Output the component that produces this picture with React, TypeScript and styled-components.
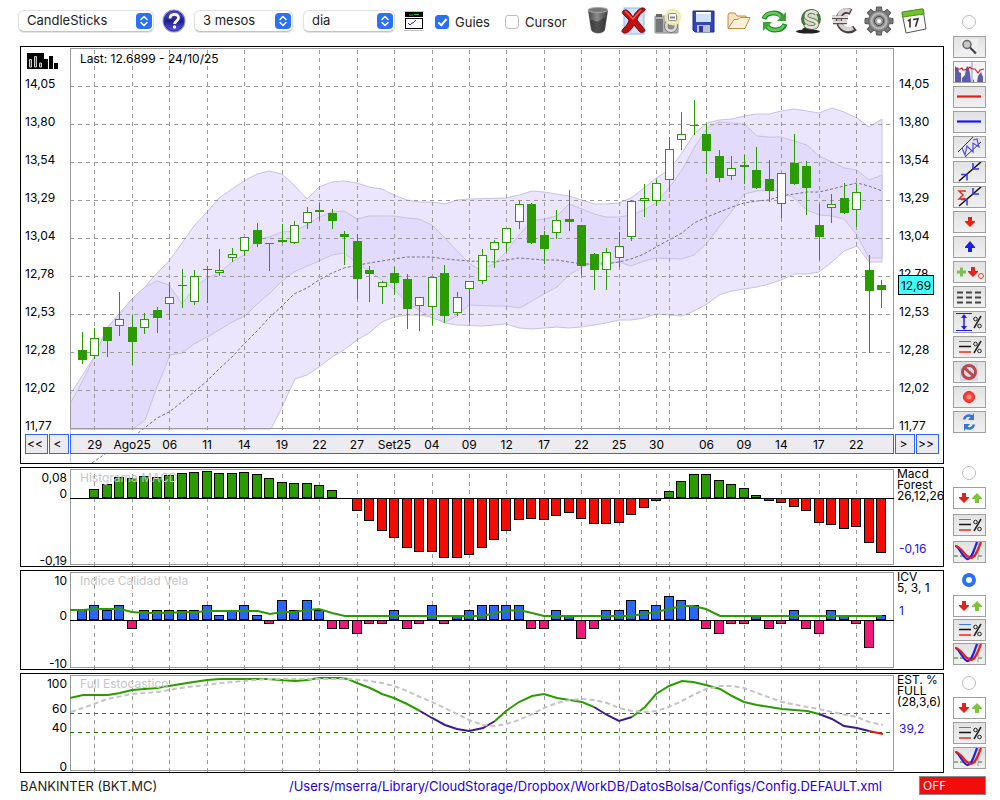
import React from "react";
import styled, { createGlobalStyle, css } from "styled-components";

const GlobalStyle = createGlobalStyle`
  *, *::before, *::after { box-sizing: border-box; }
  body {
    margin: 0;
    background: #fff;
    color: #000;
    font-family: Inter, "Liberation Sans", sans-serif;
    font-size: 12px;
    line-height: 16px;
  }
  button, select, input { font: inherit; color: inherit; margin: 0; }
`;

/* ---------- layout ---------- */

const Page = styled.div`
  display: grid;
  grid-template-columns: minmax(0, 1fr) 33px;
  column-gap: 9px;
  padding-right: 14px;
`;

const MainColumn = styled.main`
  min-width: 0;
`;

const Toolbar = styled.header`
  display: flex;
  align-items: center;
  height: 46px;
  padding: 0 12px 4px 18px;
  font-size: 13px;
  color: #222;
`;

const Panels = styled.div`
  display: flex;
  flex-direction: column;
  gap: 3px;
  padding-left: 20px;
`;

const Panel = styled.section<{ $height: number }>`
  display: grid;
  grid-template-columns: 49px minmax(0, 1fr) 49px;
  grid-template-rows: minmax(0, 1fr);
  height: ${(p) => p.$height}px;
  border: 1px solid #000;
  overflow: hidden;
`;

const Plot = styled.svg`
  display: block;
  grid-column: 2;
  grid-row: 1 / -1;
  width: 100%;
  height: 100%;
`;

const PlotTitle = styled.h2<{ $muted?: boolean }>`
  grid-column: 2;
  grid-row: 1;
  align-self: start;
  justify-self: start;
  margin: 0;
  padding: 4px 0 0 10px;
  font-size: 12px;
  font-weight: 400;
  line-height: 16px;
  color: ${(p) => (p.$muted ? "#c6c6c6" : "#000")};
  z-index: 1;
  ${(p) => p.$muted && css`padding-top: 2px;`}
`;

/* ---------- toolbar controls ---------- */

const SelectBox = styled.div<{ $width: number; $gap: number }>`
  display: grid;
  align-items: center;
  width: ${(p) => p.$width}px;
  margin-right: ${(p) => p.$gap}px;
`;

const SelectField = styled.select`
  grid-area: 1 / 1;
  appearance: none;
  width: 100%;
  height: 22px;
  padding: 0 24px 2px 8px;
  border: 1px solid #e0e0e0;
  border-bottom-color: #c4c4c4;
  border-radius: 6px;
  background: #fff;
  box-shadow: 0 1px 1px rgba(0, 0, 0, 0.12);
`;

const Stepper = styled.svg`
  grid-area: 1 / 1;
  justify-self: end;
  width: 16px;
  height: 16px;
  margin-right: 2px;
  pointer-events: none;
`;

const IconButton = styled.button<{ $gap?: number }>`
  display: flex;
  justify-content: center;
  flex: none;
  padding: 0;
  margin-right: ${(p) => p.$gap ?? 0}px;
  border: 0;
  background: none;
`;

const CheckLabel = styled.label<{ $gap: number }>`
  display: flex;
  align-items: center;
  gap: 6px;
  margin-right: ${(p) => p.$gap}px;
  padding-top: 2px;
`;

const CheckField = styled.input`
  appearance: none;
  display: grid;
  place-items: center;
  width: 14px;
  height: 14px;
  border: 1px solid #bdbdbd;
  border-radius: 3px;
  background: #fff;
  &:checked {
    border-color: #2a6ff8;
    background: #2a6ff8;
  }
  &:checked::after {
    content: "";
    width: 5px;
    height: 9px;
    margin-top: -2px;
    border: solid #fff;
    border-width: 0 2px 2px 0;
    transform: rotate(40deg);
  }
`;

const IconRow = styled.div`
  display: grid;
  grid-template-columns: repeat(10, minmax(0, 1fr));
  flex: 0 1 352px;
  margin-left: auto;
`;

/* ---------- axes ---------- */

const PriceAxis = styled.div<{ $right?: boolean }>`
  grid-column: ${(p) => (p.$right ? 3 : 1)};
  grid-row: 1;
  position: relative;
  display: flex;
  flex-direction: column;
  gap: 22px;
  padding: ${(p) => (p.$right ? "29px 0 0 5px" : "29px 0 0 4px")};
`;

const ChartTypeIcon = styled.svg`
  position: absolute;
  left: 6px;
  top: 6px;
  width: 32px;
  height: 16px;
`;

const PriceTag = styled.output`
  position: absolute;
  left: 4px;
  top: 228px;
  width: 36px;
  height: 20px;
  border: 1px solid #000;
  background: #40ffff;
  line-height: 19px;
  text-align: center;
`;

const Pager = styled.div<{ $right?: boolean }>`
  grid-column: ${(p) => (p.$right ? 3 : 1)};
  grid-row: 2;
  display: flex;
  gap: 1px;
  padding-left: ${(p) => (p.$right ? 1 : 4)}px;
  align-items: flex-start;
`;

const PagerButton = styled.button<{ $wide?: boolean }>`
  width: ${(p) => (p.$wide ? 23 : 20)}px;
  height: 20px;
  padding: 0 3px 0 0;
  border: 1px solid #2f66f5;
  background: #ebebf0;
  text-align: center;
`;

const DateBar = styled.div`
  grid-column: 2;
  grid-row: 2;
  z-index: 1;
  display: grid;
  grid-template-columns: repeat(16, minmax(0, 3fr)) minmax(0, 1fr) repeat(5, minmax(0, 3fr));
  height: 20px;
  padding: 0 18px 0 5px;
  border: 1px solid #2f66f5;
  background: #ebebf0;
  line-height: 20px;
`;

const DateLabel = styled.span`
  display: flex;
  justify-content: center;
  white-space: nowrap;
`;

const PricePanel = styled(Panel)`
  grid-template-rows: 387px 29px;
`;

const ScaleAxis = styled.div`
  grid-column: 1;
  grid-row: 1;
  display: flex;
  flex-direction: column;
  align-items: flex-end;
  padding: 2px 3px 0 0;
`;

const ScaleLabel = styled.span<{ $gap: number }>`
  flex: none;
  margin-top: ${(p) => p.$gap}px;
  line-height: 14px;
`;

const Legend = styled.div`
  grid-column: 3;
  grid-row: 1;
  padding-left: 3px;
  line-height: 11px;
  white-space: pre;
`;

const LegendValue = styled.div<{ $gap: number }>`
  margin-top: ${(p) => p.$gap}px;
  padding-left: 2px;
  line-height: 16px;
  color: #1f10f0;
`;

/* ---------- side tools ---------- */

const SideColumn = styled.aside`
  display: flex;
  flex-direction: column;
`;

const ToolGroup = styled.div<{ $top: number; $gap: number }>`
  display: flex;
  flex-direction: column;
  gap: ${(p) => p.$gap}px;
  margin-top: ${(p) => p.$top}px;
`;

const RadioField = styled.input<{ $gap: number }>`
  appearance: none;
  width: 14px;
  height: 14px;
  margin: 0 0 ${(p) => p.$gap}px 9px;
  border: 1px solid #bdbdbd;
  border-radius: 50%;
  background: #fff;
  &:checked {
    border: 4px solid #2a6ff8;
  }
`;

const ToolButton = styled.button<{ $plain?: boolean }>`
  display: block;
  width: 33px;
  height: 22px;
  padding: 0;
  border: 1px solid #a0a0a0;
  background: ${(p) => (p.$plain ? "#fff" : "linear-gradient(#e2e2e2, #f0f0f0)")};
  svg { display: block; }
`;

/* ---------- footer ---------- */

const Footer = styled.footer`
  grid-column: 1 / -1;
  display: flex;
  align-items: center;
  height: 25px;
  padding-left: 20px;
  font-size: 13px;
  color: #222;
`;

const ConfigLink = styled.a`
  margin-left: auto;
  color: #1f00e0;
  text-decoration: none;
`;

const OffButton = styled.button`
  width: 67px;
  height: 19px;
  margin-left: 37px;
  padding: 0 0 0 3px;
  border: 1px solid #8a8a8a;
  background: #f20c0c;
  color: #fff;
  font-size: 12px;
  line-height: 16px;
  text-align: left;
`;

/* ---------- data ---------- */

const GREEN = "#2a9c00";
const slotX = (i: number) => Math.round(82 + 12.485 * i);

const priceLabels = ["14,05", "13,80", "13,54", "13,29", "13,04", "12,78", "12,53", "12,28", "12,02", "11,77"];
const dateLabels = [
  "29", "Ago25", "06", "11", "14", "19", "22", "27", "Set25", "04", "09",
  "12", "17", "22", "25", "30", "", "06", "09", "14", "17", "22",
];
const guideSlots = [1, 4, 7, 10, 13, 16, 19, 22, 25, 28, 31, 34, 37, 40, 43, 46, 47, 50, 53, 56, 59, 62];

/* high, body top, body bottom, low, falling */
const candles: [number, number, number, number, number][] = [
  [332, 350, 360, 364, 1], [328, 338, 356, 359, 0], [327, 327, 341, 357, 1], [292, 319, 326, 336, 0],
  [315, 327, 342, 365, 1], [313, 319, 328, 334, 0], [307, 310, 318, 333, 1], [282, 297, 304, 320, 0],
  [269, 285, 286, 308, 1], [270, 276, 302, 305, 0], [266, 269, 270, 303, 1], [249, 270, 273, 276, 0],
  [248, 254, 258, 262, 0], [237, 237, 251, 256, 0], [223, 230, 244, 247, 1], [243, 243, 244, 271, 1],
  [224, 240, 242, 243, 1], [221, 225, 243, 244, 0], [207, 212, 223, 229, 0], [203, 210, 212, 220, 1],
  [209, 213, 221, 229, 1], [231, 234, 237, 265, 1], [234, 241, 279, 299, 1], [266, 270, 274, 302, 1],
  [281, 282, 287, 304, 0], [267, 273, 283, 295, 1], [274, 279, 309, 329, 1], [297, 297, 306, 331, 0],
  [277, 277, 307, 325, 0], [265, 273, 316, 323, 1], [292, 297, 313, 316, 0], [281, 281, 289, 322, 0],
  [249, 255, 281, 284, 0], [240, 242, 250, 268, 0], [228, 228, 243, 252, 0], [201, 204, 222, 229, 0],
  [203, 204, 243, 244, 1], [231, 235, 249, 264, 1], [210, 220, 233, 239, 0], [190, 219, 222, 231, 1],
  [225, 225, 266, 275, 1], [253, 254, 270, 290, 1], [248, 252, 270, 290, 0], [232, 246, 258, 267, 0],
  [200, 201, 237, 241, 0], [184, 198, 201, 217, 0], [180, 183, 201, 206, 0], [137, 149, 180, 192, 0],
  [112, 134, 140, 150, 0], [100, 125, 126, 135, 1], [124, 134, 151, 174, 1], [150, 156, 178, 182, 1],
  [156, 168, 176, 180, 0], [155, 165, 167, 184, 1], [147, 170, 188, 189, 1], [160, 179, 191, 202, 1],
  [173, 173, 204, 218, 0], [134, 163, 184, 185, 1], [161, 166, 188, 215, 1], [204, 225, 237, 260, 1],
  [194, 204, 208, 223, 0], [183, 198, 213, 214, 1], [184, 192, 210, 227, 0], [255, 270, 291, 353, 1],
  [280, 285, 290, 308, 1],
];

const outerUpper =
  "70,395 94,357 107,328 119,314 132,299 145,287 157,273 169,261 182,243 194,226 207,212 219,198 232,189 244,181 257,174 269,171 282,174 294,185 307,199 319,187 332,182 344,181 357,183 369,187 382,189 394,195 407,200 419,202 432,202 445,204 457,200 469,199 506,198 519,195 532,191 544,192 569,196 582,200 594,204 606,204 619,203 631,198 644,188 656,178 669,170 682,153 694,134 707,123 719,120 732,119 744,116 757,114 769,114 781,111 794,109 807,111 819,113 832,108 844,112 857,118 869,127 882,119";
const outerLower =
  "882,262 869,262 857,246 844,251 832,262 819,272 807,274 794,274 781,280 769,284 757,287 744,289 732,291 719,295 707,304 694,311 682,316 656,314 644,318 631,320 619,320 606,323 594,325 582,327 569,328 557,327 532,329 519,328 506,324 482,326 457,325 445,323 432,317 419,315 407,315 394,317 382,322 369,333 357,340 344,350 332,357 319,367 307,375 295,379 282,407 271,429 70,429";
const innerUpper =
  "70,404 82,382 94,358 107,328 119,314 132,299 145,287 157,281 169,285 182,304 194,288 207,278 219,273 232,262 244,255 257,240 269,237 282,232 294,231 307,225 319,217 332,212 344,211 357,219 369,216 394,216 407,218 419,219 432,225 445,238 457,251 469,263 480,270 494,264 506,252 519,235 532,221 544,219 557,216 569,204 582,209 594,214 606,217 619,217 631,215 644,210 656,203 669,188 682,170 694,148 707,128 719,122 744,124 757,136 769,137 781,137 794,141 807,145 819,156 832,162 844,168 857,170 869,180 882,175";
const innerLower =
  "882,258 869,258 857,235 844,219 832,216 819,215 807,210 794,198 781,191 769,190 757,191 744,194 732,211 719,227 707,243 694,255 682,259 656,258 644,261 631,266 619,262 594,263 582,267 569,275 557,287 544,294 532,301 520,308 506,306 494,306 469,305 457,316 445,322 432,318 419,310 407,303 394,289 382,280 369,271 357,263 344,253 332,255 319,261 307,266 294,272 282,281 269,294 257,304 245,316 232,322 219,330 207,337 194,344 182,353 170,355 157,387 145,420 133,429 70,429";
const average =
  "92,463 105,454 137,434 157,418 169,412 182,402 194,392 207,381 219,369 232,357 245,343 257,331 269,318 282,306 294,294 307,288 319,280 332,273 344,268 369,263 394,259 407,257 432,257 445,259 469,261 494,262 519,258 544,260 557,260 569,262 582,264 606,264 619,262 631,259 644,254 656,247 669,240 682,233 694,223 707,217 732,207 744,203 757,201 769,200 781,196 794,194 807,192 819,192 832,189 844,186 857,183 869,186 882,191";

const macdZero = 498;
const macdEnds = [
  489, 484, 477, 478, 476, 477, 475, 473, 472, 471, 473, 473, 472, 474, 478, 482, 483, 483, 485, 490, 497,
  511, 521, 531, 538, 548, 552, 552, 558, 558, 555, 548, 540, 531, 520, 519, 520, 516, 513, 519, 524, 524,
  523, 515, 508, 501, 491, 481, 474, 474, 480, 484, 488, 495, 501, 503, 507, 511, 523, 525, 529, 527, 543, 553,
];

const icvZero = 620;
const icvEnds = [
  610, 605, 610, 605, 629, 610, 610, 610, 610, 610, 605, 615, 610, 605, 615, 624, 600, 610, 600, 610, 629,
  629, 634, 624, 624, 610, 629, 624, 605, 624, 615, 610, 605, 605, 605, 605, 629, 629, 610, 615, 639, 629,
  610, 610, 600, 610, 605, 596, 600, 605, 629, 634, 624, 624, 615, 629, 624, 610, 629, 634, 610, 615, 624,
  648, 615,
];
const icvLine =
  "70,610 83,610 94,609 120,609 132,612 145,613 169,613 182,612 198,612 207,611 258,611 270,614 282,612 294,612 307,610 319,609 332,613 345,616 483,616 495,613 506,611 519,610 532,613 544,616 631,616 643,614 656,612 669,609 682,606 693,606 706,609 720,616 882,616";

const slowLine =
  "71,712 94,704 107,699 132,694 158,692 174,689 188,687 207,685 220,683 244,681 267,679 350,679 370,681 382,683 394,686 407,691 420,697 432,702 457,714 469,720 483,725 495,726 506,724 519,720 532,714 544,708 557,703 570,700 582,699 594,700 607,703 619,708 632,711 645,712 656,711 669,707 682,701 693,695 706,689 720,686 732,686 744,688 757,693 782,702 807,707 819,709 832,712 857,717 869,722 883,725";
const fastSegments: [string, string][] = [
  [GREEN, "70,698 83,695 108,695 120,693 132,690 157,688 169,686 187,683 207,680 220,679 267,679 295,681 307,680 319,678 340,678 348,679 357,683 370,688 382,694 394,698 407,704 420,711"],
  ["#3a1c8c", "420,711 432,718 445,725 457,729 469,731 483,728 495,721"],
  [GREEN, "495,721 506,711 519,702 532,696 544,694 557,698 582,702 594,707"],
  ["#3a1c8c", "594,707 607,715 619,721 632,717"],
  [GREEN, "632,717 645,707 656,694 669,686 682,681 693,682 706,685 720,689 732,696 744,702 757,705 782,709 807,711 819,714"],
  ["#3a1c8c", "819,714 832,719 844,726 857,728 869,731"],
  ["#f01010", "869,731 883,734"],
];

/* ---------- charts ---------- */

const Guides = ({ top, bottom }: { top: number; bottom: number }) => (
  <g stroke="#999" strokeDasharray="4 4" shapeRendering="crispEdges">
    {guideSlots.map((i) => (
      <line key={i} x1={slotX(i) + 0.5} x2={slotX(i) + 0.5} y1={bottom} y2={top} />
    ))}
  </g>
);

const Frame = ({ top, bottom }: { top: number; bottom: number }) => (
  <rect x="70.5" y={top + 0.5} width="823" height={bottom - top} fill="none" stroke="#999" shapeRendering="crispEdges" />
);

const PriceChart = () => (
  <Plot viewBox="70 47 824 416" preserveAspectRatio="none" role="img" aria-label="BKT.MC">
    <polygon points={`${outerUpper} ${outerLower}`} fill="#ebe5fd" stroke="#c8c1e6" />
    <polygon points={`${innerUpper} ${innerLower}`} fill="#e3dbfc" stroke="#c8c1e6" />
    <line x1="70.5" x2="70.5" y1="429" y2="463" stroke="#c8c1e6" />
    <polyline points={average} fill="none" stroke="#777089" strokeDasharray="3 2" />
    <Frame top={48} bottom={428} />
    <Guides top={49} bottom={430} />
    <g stroke="#999" strokeDasharray="4 4" shapeRendering="crispEdges">
      {priceLabels.slice(0, 9).map((label, i) => (
        <line key={label} x1="70" x2="894" y1={86.5 + i * 38} y2={86.5 + i * 38} />
      ))}
    </g>
    <g shapeRendering="crispEdges">
      {candles.map(([high, top, bottom, low, falling], i) => {
        const x = slotX(i);
        return (
          <g key={i}>
            <rect x={x} y={high} width="1" height={low - high} fill={GREEN} />
            {falling ? (
              <rect x={x - 4} y={top} width="9" height={bottom - top} fill={GREEN} />
            ) : (
              <rect x={x - 3.5} y={top + 0.5} width="8" height={bottom - top - 1} fill="#fff" stroke={GREEN} />
            )}
          </g>
        );
      })}
    </g>
  </Plot>
);

const Bars = ({ ends, zero, first, up, down }: { ends: number[]; zero: number; first: number; up: string; down: string }) => (
  <g shapeRendering="crispEdges" stroke="#000">
    {ends.map((end, k) => {
      const rising = end < zero;
      const y = rising ? end : zero;
      const h = rising ? zero - end : end - zero;
      return (
        <rect
          key={k}
          x={slotX(k + first) - 4.5}
          y={y + 0.5}
          width="9"
          height={Math.max(h - 1, 0)}
          fill={rising ? up : down}
        />
      );
    })}
    <line x1="70" x2="894" y1={zero + 0.5} y2={zero + 0.5} />
  </g>
);

const MacdChart = () => (
  <Plot viewBox="70 468 824 98" preserveAspectRatio="none" role="img" aria-label="Histgrama MACD">
    <Frame top={469} bottom={564} />
    <Guides top={473} bottom={566} />
    <Bars ends={macdEnds} zero={macdZero} first={1} up={GREEN} down="#f20c04" />
  </Plot>
);

const IcvChart = () => (
  <Plot viewBox="70 571 824 98" preserveAspectRatio="none" role="img" aria-label="Indice Calidad Vela">
    <Frame top={572} bottom={667} />
    <Guides top={576} bottom={669} />
    <Bars ends={icvEnds} zero={icvZero} first={0} up="#2b66fb" down="#f2157a" />
    <polyline points={icvLine} fill="none" stroke={GREEN} strokeWidth="2" />
  </Plot>
);

const StochasticChart = () => (
  <Plot viewBox="70 674 824 98" preserveAspectRatio="none" role="img" aria-label="Full Estocastico">
    <Frame top={675} bottom={770} />
    <Guides top={679} bottom={772} />
    <line x1="70" x2="894" y1="713.5" y2="713.5" stroke="#d8201c" strokeDasharray="4 4" shapeRendering="crispEdges" />
    <line x1="70" x2="894" y1="732.5" y2="732.5" stroke="#1c7008" strokeDasharray="4 4" shapeRendering="crispEdges" />
    {fastSegments.map(([color, points], i) => (
      <polyline key={i} points={points} fill="none" stroke={color} strokeWidth="2" />
    ))}
    <polyline points={slowLine} fill="none" stroke="#c4c4c4" strokeWidth="2" strokeDasharray="5 3" />
  </Plot>
);

/* ---------- toolbar icons ---------- */

const Icon = ({ size = 30, children }: { size?: number; children: React.ReactNode }) => (
  <svg width={size} height={size} viewBox={`0 0 ${size} ${size}`} fill="none">
    {children}
  </svg>
);

const HelpIcon = () => (
  <Icon size={24}>
    <defs>
      <linearGradient id="help" x1="0" y1="0" x2="0" y2="1">
        <stop offset="0" stopColor="#5a5ac4" />
        <stop offset="0.5" stopColor="#1c1c8c" />
        <stop offset="1" stopColor="#5a5af0" />
      </linearGradient>
    </defs>
    <circle cx="12" cy="12" r="11.5" fill="#8f8fe0" />
    <circle cx="12" cy="12" r="10" fill="url(#help)" stroke="#2a2aa0" />
    <path d="M8 9.500c0-5.500 8.500-5.500 8.500-.5 0 3-3.800 2.800-3.800 6" stroke="#fff" strokeWidth="2.800" />
    <circle cx="12.500" cy="18" r="1.700" fill="#fff" />
  </Icon>
);

const AlertIcon = () => (
  <Icon size={20}>
    <path d="M0 .5h20M0 19.500h20" stroke="#c8c8c8" />
    <rect x="1" y="1" width="18" height="5" fill="#000" />
    <path d="M5 4h4M10 3.500h5" stroke="#1fc01f" />
    <rect x="1.500" y="7.500" width="17" height="10" fill="#fff" stroke="#000" />
    <path d="M4 12l2 2 2-2 1 0 3-3" stroke="#2020e0" />
  </Icon>
);

const TrashIcon = () => (
  <Icon>
    <defs>
      <linearGradient id="bin" x1="0" x2="1">
        <stop offset="0" stopColor="#444" />
        <stop offset="0.45" stopColor="#8c8c8c" />
        <stop offset="1" stopColor="#3a3a3a" />
      </linearGradient>
    </defs>
    <path d="M5 4l3 20c2 4.500 12 4.500 14 0l3-20z" fill="url(#bin)" />
    <path d="M7 15c3-3 5 2 9 0s4-4 7-3l-2 12c-2 4-10 4-12 0z" fill="#2c2c2c" opacity="0.600" />
    <ellipse cx="15" cy="4" rx="10" ry="2.500" fill="#777" stroke="#a8a8a8" />
  </Icon>
);

const DeleteIcon = () => (
  <Icon>
    <rect x="6" y="2" width="20" height="26" fill="#cfe3fa" stroke="#8bb8ee" />
    <path d="M5 5c3-2 5-1 7 2l3 4c2-4 5-8 9-9 2 0 4 1 3 2-4 3-7 6-8 10l8 10c0 2-3 3-5 2l-6-7c-3 5-6 8-9 8-3 0-4-2-2-4 3-3 5-5 6-9l-6-6c-1-1-1-2 0-3z" fill="#c3100e" stroke="#7f0806" />
    <path d="M7 5l8 8 8-9" stroke="#ee5a50" strokeWidth="1.500" />
  </Icon>
);

const CameraIcon = () => (
  <Icon>
    <rect x="2" y="10" width="23" height="17" rx="1" fill="#b4b4b4" stroke="#8a8a8a" />
    <path d="M3 8h6v3H3z" fill="#666" />
    <rect x="3" y="13" width="7" height="13" fill="#777" />
    <circle cx="18" cy="20" r="6.500" fill="#dcdcdc" stroke="#777" />
    <circle cx="18" cy="20" r="3.500" fill="#8a8a8a" />
    <circle cx="20" cy="11" r="8.500" fill="#f8f6cc" opacity="0.700" />
    <circle cx="20" cy="11" r="7" stroke="#efeaa0" strokeWidth="2" />
    <rect x="15.500" y="7.500" width="8" height="7" rx="1" fill="#fff" stroke="#888" />
    <path d="M17 11.500h5" stroke="#888" strokeWidth="2" />
  </Icon>
);

const SaveIcon = () => (
  <Icon>
    <path d="M5 5h21v21H7l-2-2z" fill="#3344b4" stroke="#1b2a86" />
    <rect x="8" y="6" width="15" height="10" fill="#cfe2fb" />
    <rect x="8" y="6" width="15" height="2" fill="#fff" />
    <rect x="9" y="19" width="13" height="7" fill="#c0c0cc" />
    <rect x="11" y="20" width="4" height="6" fill="#2a3aa0" />
  </Icon>
);

const FolderIcon = () => (
  <Icon>
    <path d="M5 22V9l1-2h6l2 3h9v4" fill="#fbe3bd" stroke="#c28a44" />
    <path d="M5 22.500l6-9 4 0 2-2h10l-5 11z" fill="#fdf0d9" stroke="#c28a44" strokeLinejoin="round" />
  </Icon>
);

const RefreshIcon = () => (
  <Icon>
    <path d="M5 13c2-7 14-8 18-2" stroke="#1f8a22" strokeWidth="5" />
    <path d="M5 12c3-6 13-7 17-1" stroke="#64cb54" strokeWidth="2.500" />
    <path d="M27 6v9H18z" fill="#3aa535" />
    <path d="M26 18c-2 7-14 8-18 2" stroke="#1f8a22" strokeWidth="5" />
    <path d="M25 19c-3 6-13 7-17 1" stroke="#64cb54" strokeWidth="2.500" />
    <path d="M4 25v-9h9z" fill="#3aa535" />
  </Icon>
);

const DollarIcon = () => (
  <Icon>
    <ellipse cx="14" cy="25.500" rx="12" ry="2" fill="#222" />
    <path d="M8 23l4-2 8 2-3 3h-7z" fill="#222" />
    <circle cx="17" cy="13" r="8.500" fill="#cfdcc8" stroke="#3f7c36" strokeWidth="3" />
    <path d="M23 8c-3-4-11-3-11 2 0 5 11 3 11 8 0 4-8 5-12 1" stroke="#5b6a4e" strokeWidth="4.500" />
    <path d="M23 8c-3-4-11-3-11 2 0 5 11 3 11 8 0 4-8 5-12 1" stroke="#e4e0d4" strokeWidth="3" />
  </Icon>
);

const EuroIcon = () => (
  <Icon>
    <path d="M22 6c-6-3-13 1-12 9 1 9 10 12 16 7" stroke="#4a3e42" strokeWidth="6" />
    <path d="M21 5c-6-3-12 1-11 9 1 8 8 11 14 8" stroke="#d8d3d3" strokeWidth="4" />
    <path d="M3 11.500h16M4 16.500h14" stroke="#5a5052" strokeWidth="3.500" />
    <path d="M3 11h16M4 16h14" stroke="#e0dcdc" strokeWidth="2" />
  </Icon>
);

const GearIcon = () => (
  <Icon>
    <g fill="#7a7a7a" stroke="#555">
      {[0, 45, 90, 135, 180, 225, 270, 315].map((a) => (
        <path key={a} d="M12 6l.5-5h5l.5 5z" transform={`rotate(${a} 15 15)`} />
      ))}
    </g>
    <circle cx="15" cy="15" r="10.500" fill="#8a8a8a" stroke="#666" />
    <circle cx="15" cy="15" r="7.500" stroke="#b8b8b8" strokeWidth="2" />
    <circle cx="15" cy="15" r="4.500" fill="#a5a5a5" stroke="#444" />
    <circle cx="15" cy="15" r="2" fill="#fff" />
  </Icon>
);

const CalendarIcon = () => (
  <Icon>
    <path d="M3 7l21-4 3 20-20 4z" fill="#fbfbfb" stroke="#555" />
    <path d="M3 6l19-3 2 0 1 5-21 3z" fill="#6fc528" stroke="#4a9418" />
    <path d="M9 15l2-1.500v8M14 13.500l5-.7-2.500 8" stroke="#333" strokeWidth="1.600" />
  </Icon>
);

const actions: [string, React.ReactNode][] = [
  ["Trash", <TrashIcon />], ["Delete", <DeleteIcon />], ["Snapshot", <CameraIcon />], ["Save", <SaveIcon />],
  ["Open", <FolderIcon />], ["Refresh", <RefreshIcon />], ["Dollar", <DollarIcon />], ["Euro", <EuroIcon />],
  ["Settings", <GearIcon />], ["Calendar", <CalendarIcon />],
];

/* ---------- side icons, drawn on a 31 x 20 face ---------- */

const Face = ({ children }: { children: React.ReactNode }) => (
  <svg width="31" height="20" viewBox="0 0 31 20" fill="none">
    {children}
  </svg>
);

const PercentMark = () => (
  <g stroke="#222">
    <path d="M27 4l-7 12" strokeWidth="1.500" />
    <circle cx="21.500" cy="7" r="1.800" />
    <circle cx="25.500" cy="14" r="1.800" />
  </g>
);

const LevelsIcon = () => (
  <Face>
    <path d="M5 4.500h12" stroke="#3f78f5" />
    <path d="M5 9.500h12" stroke="#111" strokeWidth="1.500" />
    <path d="M5 15h12" stroke="#f25a48" strokeWidth="2" />
    <PercentMark />
  </Face>
);

const CrossIcon = () => (
  <Face>
    <path d="M0 14h29" stroke="#2c7a20" strokeDasharray="4 2" />
    <path d="M24 0v20" stroke="#999" strokeDasharray="3 2" />
    <path d="M2 4c4 2 8 14 12 13 4-1 6-9 9-17" stroke="#2222f0" strokeWidth="2.200" />
    <path d="M1 4c7 0 10 12 16 12 4 0 7-8 10-16" stroke="#e0241c" strokeWidth="2.200" />
  </Face>
);

const ArrowsIcon = () => (
  <Face>
    <path d="M8 5h4v4h3v1l-5 5-5-5V9h3z" fill="#e0241c" />
    <path d="M21 15h4v-4h3v-1l-5-5-5 5v1h3z" fill="#7cc43a" />
  </Face>
);

const SegmentArrows = () => (
  <>
    <path d="M5 19L27 0" stroke="#111" strokeWidth="1.500" />
    <path d="M7 12.500h6v6M19 1v6h6" stroke="#3434e8" strokeWidth="1.500" />
  </>
);

const drawingTools: [string, React.ReactNode][] = [
  ["Zoom", <Face><rect x="7" y="2" width="17" height="16" fill="#efefef" /><circle cx="13" cy="7.500" r="4" fill="#c8c8c8" stroke="#666" strokeWidth="1.500" /><path d="M16 10.500l6 6" stroke="#444" strokeWidth="2.200" /></Face>],
  ["Volume", <Face><rect width="31" height="20" fill="#f6f4fb" /><path d="M1 20V4l2 2 1-1 1 5 2 1v9zM8 20v-4l3-3 1-7 2-2 2 7 1 9zM18 20v-3l2 1v2zM23 20l1-6 3-4 2 5v5z" fill="#5c5cae" /><path d="M18 0v20" stroke="#c4c4e0" strokeWidth="2" /><path d="M1 7h5l2-1 1 2 5-1 2-2 2 2h3l3 4 2-3 4-1" stroke="#dc2020" strokeWidth="1.200" /></Face>],
  ["Red line", <Face><path d="M3 9.500h24" stroke="#f06a64" strokeWidth="3" /><path d="M3 9.500h24" stroke="#dc2020" /></Face>],
  ["Blue line", <Face><path d="M3 9.500h24" stroke="#6a6af4" strokeWidth="3" /><path d="M3 9.500h24" stroke="#1c1ce4" /></Face>],
  ["Channel", <Face><path d="M4 15L19 0M11 20L27 5" stroke="#333" /><path d="M8 11l3 7 2-9 6 6V6l6 4-2-8-4 1" stroke="#5050e0" strokeWidth="1.200" /></Face>],
  ["Trend", <Face><SegmentArrows /></Face>],
  ["Trend sum", <Face><SegmentArrows /><path d="M11 5V4H5l4 4-4 4h6v-1" stroke="#e83024" strokeWidth="1.500" /></Face>],
  ["Sell mark", <Face><path d="M14 5h4v4h3v1l-5 5-5-5V9h3z" fill="#f01c0c" /></Face>],
  ["Buy mark", <Face><path d="M14 15h4v-4h3v-1l-5-6-5 6v1h3z" fill="#1c1cf0" /></Face>],
  ["Marks", <Face><path d="M3 10h9M7.500 5.500v9" stroke="#7cc050" strokeWidth="3" /><path d="M17 5h4v4h3v1l-5 5-5-5V9h3z" fill="#e0241c" /><circle cx="27" cy="14" r="2.500" stroke="#e84038" /></Face>],
  ["Line style", <Face><path d="M3 5.500h24M3 10.500h24M3 15.500h24" stroke="#444" strokeWidth="2" strokeDasharray="6 3" /></Face>],
  ["Range", <Face><path d="M2 1.500h16M2 18.500h16" stroke="#2020e8" /><path d="M10 3v14" stroke="#2020e8" strokeWidth="1.500" /><path d="M7 6l3-4 3 4zM7 14l3 4 3-4z" fill="#2020e8" /><PercentMark /></Face>],
  ["Levels", <LevelsIcon />],
  ["Forbid", <Face><rect x="6" y="1" width="18" height="18" fill="#d4daea" /><circle cx="15" cy="10" r="6.500" stroke="#bc4846" strokeWidth="3" /><path d="M10.500 6l9 8" stroke="#bc4846" strokeWidth="3" /></Face>],
  ["Record", <Face><circle cx="15" cy="10" r="5.500" fill="#f4423c" stroke="#e02020" /><circle cx="15" cy="10" r="2.500" fill="#ff8a84" /></Face>],
  ["Reload", <Face><path d="M10 7.500c1-4 5-5 8-3" stroke="#3478d4" strokeWidth="2.500" /><path d="M20 12.500c-1 4-5 5-8 3" stroke="#3478d4" strokeWidth="2.500" /><path d="M20 1v7h-6zM10 19v-7h6z" fill="#3478d4" /></Face>],
];

/* ---------- page ---------- */

const Select = ({ label, value, width, gap }: { label: string; value: string; width: number; gap: number }) => (
  <SelectBox $width={width} $gap={gap}>
    <SelectField aria-label={label} defaultValue={value}>
      <option>{value}</option>
    </SelectField>
    <Stepper viewBox="0 0 16 16" fill="none">
      <rect width="16" height="16" rx="4" fill="#2a70f8" />
      <path d="M5 6.500l3-3 3 3M5 9.500l3 3 3-3" stroke="#fff" strokeWidth="1.500" strokeLinecap="round" strokeLinejoin="round" />
    </Stepper>
  </SelectBox>
);

const IndicatorTools = ({ name, top, radioGap, gap, checked }: { name: string; top: number; radioGap: number; gap: number; checked?: boolean }) => (
  <ToolGroup $top={top} $gap={gap}>
    <RadioField type="radio" name="active" aria-label={name} defaultChecked={checked} $gap={radioGap} />
    <ToolButton $plain aria-label="Signals"><ArrowsIcon /></ToolButton>
    <ToolButton aria-label="Levels"><LevelsIcon /></ToolButton>
    <ToolButton aria-label="Crossings"><CrossIcon /></ToolButton>
  </ToolGroup>
);

const Scale = ({ labels }: { labels: [string, number][] }) => (
  <ScaleAxis>
    {labels.map(([text, gap]) => (
      <ScaleLabel key={text} $gap={gap}>{text}</ScaleLabel>
    ))}
  </ScaleAxis>
);

export default function App() {
  return (
    <Page>
      <GlobalStyle />
      <MainColumn>
        <Toolbar>
          <Select label="Chart type" value="CandleSticks" width={136} gap={8} />
          <IconButton $gap={8} aria-label="Help"><HelpIcon /></IconButton>
          <Select label="Period" value="3 mesos" width={99} gap={10} />
          <Select label="Interval" value="dia" width={92} gap={9} />
          <IconButton $gap={11} aria-label="Alerts"><AlertIcon /></IconButton>
          <CheckLabel $gap={15}><CheckField type="checkbox" defaultChecked />Guies</CheckLabel>
          <CheckLabel $gap={0}><CheckField type="checkbox" />Cursor</CheckLabel>
          <IconRow>
            {actions.map(([name, icon]) => (
              <IconButton key={name} aria-label={name}>{icon}</IconButton>
            ))}
          </IconRow>
        </Toolbar>

        <Panels>
          <PricePanel $height={418}>
            <PriceAxis>
              <ChartTypeIcon viewBox="0 0 32 16">
                <rect width="17" height="16" fill="#000" />
                <path d="M2.500 14V6.500h2V14zM7.500 14V3.500h2V14zM12.500 14v-4h2v4z" fill="#444" stroke="#ccc" />
                <path d="M17 6h4v10h-4zM22 3h4v13h-4zM27 10h4v6h-4z" fill="#000" />
              </ChartTypeIcon>
              {priceLabels.map((label) => <span key={label}>{label}</span>)}
            </PriceAxis>
            <PriceChart />
            <PlotTitle>Last: 12.6899 - 24/10/25</PlotTitle>
            <PriceAxis $right>
              {priceLabels.map((label) => <span key={label}>{label}</span>)}
              <PriceTag>12,69</PriceTag>
            </PriceAxis>
            <Pager>
              <PagerButton $wide>&lt;&lt;</PagerButton>
              <PagerButton>&lt;</PagerButton>
            </Pager>
            <DateBar>
              {dateLabels.map((label, i) => <DateLabel key={i}>{label}</DateLabel>)}
            </DateBar>
            <Pager $right>
              <PagerButton>&gt;</PagerButton>
              <PagerButton $wide>&gt;&gt;</PagerButton>
            </Pager>
          </PricePanel>

          <Panel $height={100}>
            <Scale labels={[["0,08", 1], ["0", 2], ["-0,19", 53]]} />
            <MacdChart />
            <PlotTitle $muted>Histgrama MACD</PlotTitle>
            <Legend>
              {"Macd\nForest\n26,12,26"}
              <LegendValue $gap={40}>-0,16</LegendValue>
            </Legend>
          </Panel>

          <Panel $height={100}>
            <Scale labels={[["10", 1], ["0", 21], ["-10", 34]]} />
            <IcvChart />
            <PlotTitle $muted>Indice Calidad Vela</PlotTitle>
            <Legend>
              {"ICV\n5, 3, 1"}
              <LegendValue $gap={10}>1</LegendValue>
            </Legend>
          </Panel>

          <Panel $height={100}>
            <Scale labels={[["100", 1], ["60", 11], ["40", 5], ["0", 25]]} />
            <StochasticChart />
            <PlotTitle $muted>Full Estocastico</PlotTitle>
            <Legend>
              {"EST. %\nFULL\n(28,3,6)"}
              <LegendValue $gap={14}>39,2</LegendValue>
            </Legend>
          </Panel>
        </Panels>
      </MainColumn>

      <SideColumn>
        <ToolGroup $top={15} $gap={3}>
          <RadioField type="radio" name="active" aria-label="Price" $gap={4} />
          {drawingTools.map(([name, icon]) => (
            <ToolButton key={name} aria-label={name}>{icon}</ToolButton>
          ))}
        </ToolGroup>
        <IndicatorTools name="MACD" top={33} radioGap={2} gap={5} />
        <IndicatorTools name="ICV" top={10} radioGap={6} gap={2} checked />
        <IndicatorTools name="Estocastico" top={11} radioGap={4} gap={3} />
      </SideColumn>

      <Footer>
        <span>BANKINTER (BKT.MC)</span>
        <ConfigLink href="#config">
          /Users/mserra/Library/CloudStorage/Dropbox/WorkDB/DatosBolsa/Configs/Config.DEFAULT.xml
        </ConfigLink>
        <OffButton>OFF</OffButton>
      </Footer>
    </Page>
  );
}
